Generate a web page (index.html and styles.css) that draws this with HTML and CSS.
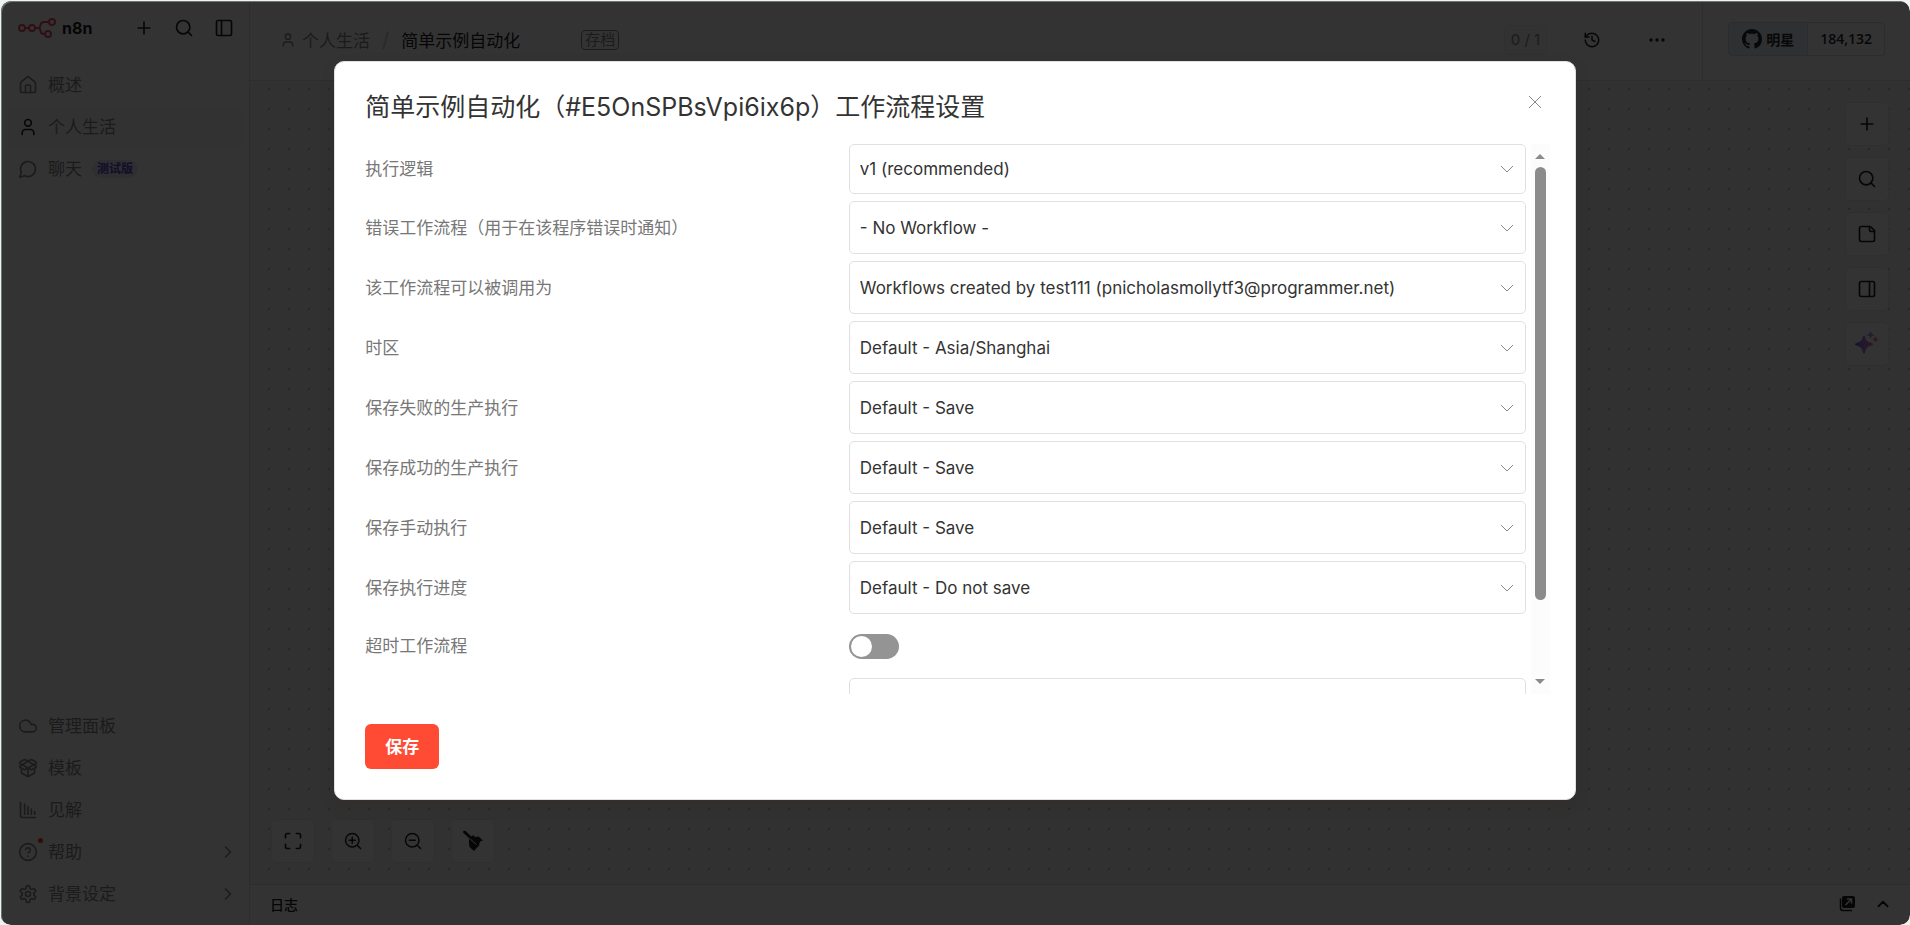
FILE: index.html
```html
<!DOCTYPE html>
<html lang="zh-CN">
<head>
    <meta charset="UTF-8">
    <meta name="viewport" content="width=device-width, initial-scale=1.0">
    <title>简单示例自动化 - n8n</title>
    <link rel="stylesheet" href="styles.css">
</head>
<body>
    <!-- Shared icons -->
    <svg width="0" height="0" class="sprite" aria-hidden="true">
        <symbol id="plus" viewBox="0 0 24 24"><path d="M5 12h14M12 5v14"/></symbol>
        <symbol id="search" viewBox="0 0 24 24"><circle cx="11" cy="11" r="8"/><path d="m21 21-4.3-4.3"/></symbol>
        <symbol id="user" viewBox="0 0 24 24"><circle cx="12" cy="7" r="4"/><path d="M19 21v-2a4 4 0 0 0-4-4H9a4 4 0 0 0-4 4v2"/></symbol>
        <symbol id="chevron-right" viewBox="0 0 24 24"><path d="m9 18 6-6-6-6"/></symbol>
        <symbol id="arrow-down" viewBox="0 0 14 14"><path d="m1 4 6 6 6-6"/></symbol>
    </svg>

    <div class="app">
        <aside class="sidebar">
            <div class="sidebar-header">
                <a href="#" class="logo">
                    <svg class="logo-mark" width="38" height="20" viewBox="0 0 38 20" fill="none" stroke="#ea4b71" stroke-width="2">
                        <circle cx="4" cy="10" r="3"/>
                        <circle cx="14" cy="10" r="3"/>
                        <circle cx="34" cy="4" r="3"/>
                        <circle cx="30" cy="16" r="3"/>
                        <path d="M7 10h4M17 10h4M31 4h-5q-3 0-3.500 3t-2 3q1.500 0 2 3t3.500 3h1"/>
                    </svg>
                    <span>n8n</span>
                </a>
                <button class="icon-btn" aria-label="新建"><svg class="icon"><use href="#plus"/></svg></button>
                <button class="icon-btn" aria-label="搜索"><svg class="icon"><use href="#search"/></svg></button>
                <button class="icon-btn" aria-label="折叠"><svg class="icon" viewBox="0 0 24 24"><rect x="3" y="3" width="18" height="18" rx="2"/><path d="M9 3v18"/></svg></button>
            </div>

            <nav class="menu">
                <a href="#" class="menu-item">
                    <svg class="icon" viewBox="0 0 24 24"><path d="M15 21v-8a1 1 0 0 0-1-1h-4a1 1 0 0 0-1 1v8"/><path d="M3 10a2 2 0 0 1 .7-1.500l7-6a2 2 0 0 1 2.600 0l7 6A2 2 0 0 1 21 10v9a2 2 0 0 1-2 2H5a2 2 0 0 1-2-2z"/></svg>
                    <span class="label">概述</span>
                </a>
                <a href="#" class="menu-item active">
                    <svg class="icon"><use href="#user"/></svg>
                    <span class="label">个人生活</span>
                </a>
                <a href="#" class="menu-item">
                    <svg class="icon" viewBox="0 0 24 24"><path d="M7.900 20A9 9 0 1 0 4 16.100L2 22Z"/></svg>
                    <span class="label">聊天</span>
                    <span class="beta">测试版</span>
                </a>
            </nav>

            <nav class="menu menu-bottom">
                <a href="#" class="menu-item">
                    <svg class="icon" viewBox="0 0 24 24"><path d="M17.500 19H9a7 7 0 1 1 6.700-9h1.800a4.500 4.500 0 1 1 0 9Z"/></svg>
                    <span class="label">管理面板</span>
                </a>
                <a href="#" class="menu-item">
                    <svg class="icon" viewBox="0 0 24 24"><path d="M12 22v-9"/><path d="M15.170 2.210a1.670 1.670 0 0 1 1.630 0L21.500 4.900a.93.93 0 0 1 0 1.600L8.820 13.790a1.650 1.650 0 0 1-1.640 0L2.500 11.100a.93.93 0 0 1 0-1.600z"/><path d="M20 13v3.870a2.060 2.060 0 0 1-1.110 1.830l-6 3.080a1.930 1.930 0 0 1-1.780 0l-6-3.080A2.060 2.060 0 0 1 4 16.870V13"/><path d="M21.500 11.100a.93.93 0 0 0 0-1.600L8.830 2.210a1.640 1.640 0 0 0-1.630 0L2.500 4.900a.93.93 0 0 0 0 1.600l12.680 7.290a1.640 1.640 0 0 0 1.630 0z"/></svg>
                    <span class="label">模板</span>
                </a>
                <a href="#" class="menu-item">
                    <svg class="icon" viewBox="0 0 24 24"><path d="M3 3v16a2 2 0 0 0 2 2h16M8 17V5M12 17V8M16 17v-6M20 17v-3"/></svg>
                    <span class="label">见解</span>
                </a>
                <a href="#" class="menu-item">
                    <svg class="icon" viewBox="0 0 24 24"><circle cx="12" cy="12" r="10"/><path d="M9.100 9a3 3 0 0 1 5.800 1c0 2-3 3-3 3M12 17h.01"/></svg>
                    <span class="label notify">帮助</span>
                    <svg class="icon chevron"><use href="#chevron-right"/></svg>
                </a>
                <a href="#" class="menu-item">
                    <svg class="icon" viewBox="0 0 24 24"><path d="M12.220 2h-.44a2 2 0 0 0-2 2v.18a2 2 0 0 1-1 1.730l-.43.25a2 2 0 0 1-2 0l-.15-.08a2 2 0 0 0-2.730.73l-.22.38a2 2 0 0 0 .73 2.730l.15.1a2 2 0 0 1 1 1.720v.51a2 2 0 0 1-1 1.740l-.15.09a2 2 0 0 0-.73 2.730l.22.38a2 2 0 0 0 2.730.73l.15-.08a2 2 0 0 1 2 0l.43.25a2 2 0 0 1 1 1.730V20a2 2 0 0 0 2 2h.44a2 2 0 0 0 2-2v-.18a2 2 0 0 1 1-1.730l.43-.25a2 2 0 0 1 2 0l.15.08a2 2 0 0 0 2.730-.73l.22-.39a2 2 0 0 0-.73-2.730l-.15-.08a2 2 0 0 1-1-1.740v-.5a2 2 0 0 1 1-1.740l.15-.09a2 2 0 0 0 .73-2.730l-.22-.38a2 2 0 0 0-2.730-.73l-.15.08a2 2 0 0 1-2 0l-.43-.25a2 2 0 0 1-1-1.730V4a2 2 0 0 0-2-2z"/><circle cx="12" cy="12" r="3"/></svg>
                    <span class="label">背景设定</span>
                    <svg class="icon chevron"><use href="#chevron-right"/></svg>
                </a>
            </nav>
        </aside>

        <main class="main">
            <header class="topbar">
                <div class="breadcrumbs">
                    <svg class="icon icon-sm"><use href="#user"/></svg>
                    <a href="#" class="crumb">个人生活</a>
                    <span class="slash">/</span>
                    <span class="workflow-name">简单示例自动化</span>
                    <span class="tag">存档</span>
                </div>
                <div class="actions">
                    <span class="counter">0 / 1</span>
                    <button class="icon-btn" aria-label="历史"><svg class="icon icon-md" viewBox="0 0 24 24"><path d="M3 12a9 9 0 1 0 9-9 9.750 9.750 0 0 0-6.740 2.740L3 8"/><path d="M3 3v5h5M12 7v5l4 2"/></svg></button>
                    <button class="icon-btn" aria-label="更多"><svg class="icon icon-md bold" viewBox="0 0 24 24"><circle cx="12" cy="12" r="1"/><circle cx="20" cy="12" r="1"/><circle cx="4" cy="12" r="1"/></svg></button>
                </div>
                <div class="github">
                    <a href="#" class="gh-btn">
                        <svg width="20" height="20" viewBox="0 0 16 16" fill="currentColor"><path d="M8 0C3.580 0 0 3.580 0 8c0 3.540 2.290 6.530 5.470 7.590.4.070.55-.17.55-.38 0-.19-.01-.82-.01-1.490-2.010.37-2.530-.49-2.690-.94-.09-.23-.48-.94-.82-1.130-.28-.15-.68-.52-.01-.53.63-.01 1.080.58 1.230.82.72 1.210 1.870.87 2.330.66.07-.52.28-.87.51-1.070-1.780-.2-3.640-.89-3.640-3.950 0-.87.31-1.590.82-2.150-.08-.2-.36-1.020.08-2.120 0 0 .67-.21 2.200.82.64-.18 1.320-.27 2-.27s1.360.09 2 .27c1.530-1.040 2.200-.82 2.200-.82.44 1.100.16 1.920.08 2.120.51.56.82 1.270.82 2.150 0 3.070-1.870 3.750-3.650 3.950.29.25.54.73.54 1.480 0 1.070-.01 1.930-.01 2.200 0 .21.15.46.55.38A8.010 8.010 0 0 0 16 8c0-4.420-3.580-8-8-8"/></svg>
                        <span>明星</span>
                    </a>
                    <a href="#" class="gh-count">184,132</a>
                </div>
            </header>

            <section class="canvas">
                <div class="side-tools">
                    <button class="tool" aria-label="添加节点"><svg class="icon"><use href="#plus"/></svg></button>
                    <button class="tool" aria-label="搜索节点"><svg class="icon"><use href="#search"/></svg></button>
                    <button class="tool" aria-label="便签"><svg class="icon" viewBox="0 0 24 24"><path d="M16 3H5a2 2 0 0 0-2 2v14a2 2 0 0 0 2 2h14a2 2 0 0 0 2-2V8Z"/><path d="M15 3v4a2 2 0 0 0 2 2h4"/></svg></button>
                    <button class="tool" aria-label="面板"><svg class="icon" viewBox="0 0 24 24"><rect x="3" y="3" width="18" height="18" rx="2"/><path d="M15 3v18"/></svg></button>
                    <button class="tool" aria-label="AI">
                        <svg width="24" height="24" viewBox="0 0 24 24">
                            <defs><linearGradient id="ai" x1="0" x2="1"><stop offset="0" stop-color="#5b60e8"/><stop offset=".5" stop-color="#aa7bec"/><stop offset="1" stop-color="#ec7b8e"/></linearGradient></defs>
                            <path fill="url(#ai)" d="M8 4.500q1-2 2 0c1 4 2 5 6.500 6.500q3 1 0 2.500c-4 1-5.500 2.500-6.500 7q-1 2.500-2 0c-1-4.500-2.500-6-6.500-7q-3-1.500 0-2.500C6 9.500 7 8.500 8 4.500z"/>
                            <path stroke="#aa7bec" stroke-width="1.500" d="M15.500 0v6M12.500 3h6"/>
                            <path stroke="#ec7b8e" stroke-width="1.500" d="M20.500 5v5M18 7.500h5"/>
                        </svg>
                    </button>
                </div>
                <div class="zoom-tools">
                    <button class="tool" aria-label="适应视图"><svg class="icon" viewBox="0 0 24 24"><path d="M8 3H5a2 2 0 0 0-2 2v3M21 8V5a2 2 0 0 0-2-2h-3M3 16v3a2 2 0 0 0 2 2h3M16 21h3a2 2 0 0 0 2-2v-3"/></svg></button>
                    <button class="tool" aria-label="放大"><svg class="icon icon-md" viewBox="0 0 24 24"><circle cx="11" cy="11" r="9"/><path d="m22 22-4.300-4.300M11 7v8M7 11h8"/></svg></button>
                    <button class="tool" aria-label="缩小"><svg class="icon icon-md" viewBox="0 0 24 24"><circle cx="11" cy="11" r="9"/><path d="m22 22-4.300-4.300M7 11h8"/></svg></button>
                    <button class="tool" aria-label="整理"><svg width="22" height="22" viewBox="0 0 22 22" fill="currentColor"><path d="M2.500 2 9 8" stroke="currentColor" stroke-width="3" stroke-linecap="round"/><path d="m7 9.500 4-4.500 2 2 3.500-.5 4.500 4-3 1-1 4-5 5.500-4.500-4-.5-3z"/><path d="m7.500 8.500 7 6" stroke="#fff"/></svg></button>
                </div>
            </section>

            <footer class="logs">
                <span>日志</span>
                <button class="icon-btn" aria-label="弹出"><svg width="17" height="17" viewBox="0 0 17 17"><rect x="3" y="1" width="13" height="12" rx="2" fill="currentColor"/><path d="M1.500 3.500V13q0 2.500 2.500 2.500h9" fill="none" stroke="currentColor" stroke-width="1.500"/><path d="m6.500 10 6-6M8 4h4.500v4.500" fill="none" stroke="#fff" stroke-width="1.500"/></svg></button>
                <button class="icon-btn" aria-label="展开"><svg class="icon icon-md bold" viewBox="0 0 24 24"><path d="m18 15-6-6-6 6"/></svg></button>
            </footer>
        </main>

        <div class="overlay">
            <div class="modal" role="dialog" aria-modal="true" aria-labelledby="modalTitle">
                <div class="modal-header">
                    <h1 id="modalTitle">简单示例自动化（#E5OnSPBsVpi6ix6p）工作流程设置</h1>
                    <button class="close" aria-label="关闭"><svg width="14" height="14" viewBox="0 0 14 14"><path d="m1 1 12 12M13 1 1 13"/></svg></button>
                </div>

                <div class="modal-body">
                    <form class="settings" id="settings">
                        <div class="row row-first">
                            <label for="order">执行逻辑</label>
                            <div class="select"><select id="order"><option>v1 (recommended)</option></select><svg><use href="#arrow-down"/></svg></div>
                        </div>
                        <div class="row">
                            <label for="errorWorkflow">错误工作流程（用于在该程序错误时通知）</label>
                            <div class="select"><select id="errorWorkflow"><option>- No Workflow -</option></select><svg><use href="#arrow-down"/></svg></div>
                        </div>
                        <div class="row">
                            <label for="caller">该工作流程可以被调用为</label>
                            <div class="select"><select id="caller"><option>Workflows created by test111 (pnicholasmollytf3@programmer.net)</option></select><svg><use href="#arrow-down"/></svg></div>
                        </div>
                        <div class="row">
                            <label for="timezone">时区</label>
                            <div class="select"><select id="timezone"><option>Default - Asia/Shanghai</option></select><svg><use href="#arrow-down"/></svg></div>
                        </div>
                        <div class="row">
                            <label for="saveFailed">保存失败的生产执行</label>
                            <div class="select"><select id="saveFailed"><option>Default - Save</option></select><svg><use href="#arrow-down"/></svg></div>
                        </div>
                        <div class="row">
                            <label for="saveSuccess">保存成功的生产执行</label>
                            <div class="select"><select id="saveSuccess"><option>Default - Save</option></select><svg><use href="#arrow-down"/></svg></div>
                        </div>
                        <div class="row">
                            <label for="saveManual">保存手动执行</label>
                            <div class="select"><select id="saveManual"><option>Default - Save</option></select><svg><use href="#arrow-down"/></svg></div>
                        </div>
                        <div class="row">
                            <label for="saveProgress">保存执行进度</label>
                            <div class="select"><select id="saveProgress"><option>Default - Do not save</option></select><svg><use href="#arrow-down"/></svg></div>
                        </div>
                        <div class="row row-switch">
                            <label for="timeout">超时工作流程</label>
                            <input type="checkbox" role="switch" id="timeout" class="switch">
                        </div>
                        <div class="row">
                            <span></span>
                            <div class="select"><input type="text" aria-label="节省时间"></div>
                        </div>
                    </form>
                    <div class="scrollbar" aria-hidden="true">
                        <span class="arrow up"></span>
                        <span class="track"><span class="thumb"></span></span>
                        <span class="arrow down"></span>
                    </div>
                </div>

                <div class="modal-footer">
                    <button class="save" type="submit" form="settings">保存</button>
                </div>
            </div>
        </div>
    </div>
</body>
</html>
```
FILE: styles.css
```css
* {
    margin: 0;
    padding: 0;
    box-sizing: border-box;
}

body {
    height: 100vh;
    padding: 1px 0 0 1px;
    overflow: hidden;
    background: #eef2f1;
    font-family: Inter, "Noto Sans CJK SC", sans-serif;
    font-size: 17px;
    color: #333;
}

a {
    color: inherit;
    text-decoration: none;
}

button {
    border: none;
    background: none;
    color: inherit;
    font: inherit;
    cursor: pointer;
}

svg {
    display: block;
    flex: none;
}

.sprite {
    position: absolute;
}

.icon {
    width: 20px;
    height: 20px;
    fill: none;
    stroke: currentColor;
    stroke-width: 2;
    stroke-linecap: round;
    stroke-linejoin: round;
}

.icon-sm {
    width: 16px;
    height: 16px;
}

.icon-md {
    width: 18px;
    height: 18px;
}

.bold {
    stroke-width: 2.5;
}

.icon-btn {
    display: flex;
    align-items: center;
    justify-content: center;
    width: 40px;
    height: 40px;
}

.app {
    position: relative;
    display: flex;
    height: 100%;
    border-radius: 10px;
    overflow: hidden;
    background: #fff;
}

/* Sidebar */
.sidebar {
    display: flex;
    flex-direction: column;
    width: 249px;
    flex: none;
    padding: 7px 5px 11px 7px;
    border-right: 1px solid #e0e0e0;
}

.sidebar-header {
    display: flex;
    align-items: center;
    margin-bottom: 17px;
    padding-left: 10px;
    color: #222;
}

.logo {
    display: flex;
    align-items: center;
    gap: 6px;
    margin-right: auto;
    font-size: 16px;
    font-weight: 700;
}

.menu {
    display: flex;
    flex-direction: column;
    gap: 2px;
    color: #888;
}

.menu-bottom {
    margin-top: auto;
}

.menu-item {
    display: flex;
    align-items: center;
    gap: 10px;
    height: 40px;
    padding: 0 6px 0 10px;
    border-radius: 5px;
}

.menu-item.active {
    background: #f8f8f8;
}

.menu-item.active .icon {
    color: #222;
}

.label {
    padding-bottom: 3px;
}

.beta {
    padding: 0 5px;
    border-radius: 9px;
    background: #e8e6f5;
    color: #5b46c8;
    font-size: 12px;
    font-weight: 700;
    line-height: 18px;
}

.chevron {
    margin-left: auto;
}

.notify {
    position: relative;
}

.notify::before {
    content: "";
    position: absolute;
    top: 0;
    left: -10px;
    width: 5px;
    height: 5px;
    border-radius: 50%;
    background: #f33;
}

/* Main */
.main {
    display: flex;
    flex: 1;
    flex-direction: column;
    min-width: 0;
}

.topbar {
    display: flex;
    align-items: stretch;
    height: 80px;
    border-bottom: 1px solid #e0e0e0;
}

.breadcrumbs {
    display: flex;
    flex: 1;
    align-items: center;
    padding: 0 0 2px 30px;
    color: #888;
}

.crumb {
    margin-left: 6px;
}

.slash {
    margin: 0 12px;
    color: #ccc;
    font-size: 20px;
}

.workflow-name {
    color: #222;
}

.tag {
    margin-left: 61px;
    padding: 0 3px;
    border: 1px solid #888;
    border-radius: 4px;
    font-size: 15px;
    line-height: 18px;
}

.actions {
    display: flex;
    align-items: center;
    gap: 25px;
    padding: 0 25px 2px 0;
    color: #222;
}

.counter {
    padding: 0 6px;
    border: 1px solid #f0f0f0;
    border-radius: 4px;
    background: #f8f8f8;
    color: #888;
    font-size: 15px;
    line-height: 28px;
}

.github {
    display: flex;
    align-items: center;
    padding: 0 25px;
    border-left: 1px solid #e0e0e0;
    color: #25292e;
    font-size: 14px;
    font-weight: 600;
}

.gh-btn,
.gh-count {
    display: flex;
    align-items: center;
    height: 34px;
    margin-bottom: 4px;
    border: 1px solid #d5dadf;
}

.gh-btn {
    gap: 4px;
    padding: 0 13px;
    border-radius: 4px 0 0 4px;
    background: #ebf0f4;
}

.gh-count {
    padding: 0 12px;
    border-left: none;
    border-radius: 0 4px 4px 0;
    font-family: "Open Sans", sans-serif;
}

.canvas {
    display: flex;
    flex: 1;
    flex-direction: column;
    justify-content: space-between;
    padding: 21px;
    background: #f5f5f5 radial-gradient(circle at 19px 8px, #c4c4c4 1px, transparent 1px) 0 0 / 20px 20px;
}

.side-tools {
    display: flex;
    flex-direction: column;
    align-self: flex-end;
    gap: 11px;
}

.zoom-tools {
    display: flex;
    gap: 16px;
}

.tool {
    display: flex;
    align-items: center;
    justify-content: center;
    width: 44px;
    height: 44px;
    border: 1px solid #e8e8e8;
    border-radius: 5px;
    background: #fff;
    color: #222;
}

.logs {
    display: flex;
    align-items: center;
    height: 41px;
    padding: 0 10px 3px 20px;
    border-top: 1px solid #e0e0e0;
    color: #222;
    font-size: 14px;
    font-weight: 500;
}

.logs span {
    flex: 1;
}

.logs .icon-btn {
    width: 35px;
}

/* Modal */
.overlay {
    position: absolute;
    inset: 0 0 0 -1px;
    display: flex;
    align-items: flex-start;
    justify-content: center;
    padding-top: 60px;
    border-radius: 10px;
    background: rgba(0, 0, 0, 0.8);
    box-shadow: inset 2px 1px 0 #6f7573;
}

.modal {
    width: 65%;
    padding: 0 25px 30px 30px;
    border: 1px solid #e0e0e0;
    border-radius: 10px;
    background: #fff;
    box-shadow: 0 6px 16px rgba(68, 28, 23, 0.1);
}

.modal-header {
    display: flex;
    align-items: flex-start;
    justify-content: space-between;
    padding: 30px 8px 22px 0;
}

.modal-header h1 {
    font-size: 25px;
    font-weight: 400;
    line-height: 30px;
}

.close {
    margin-top: 3px;
}

.close svg {
    fill: none;
    stroke: #888;
}

.modal-body {
    display: flex;
    gap: 5px;
    height: calc(100vh - 375px);
}

.settings {
    flex: 1;
    overflow: hidden;
}

.row {
    display: grid;
    grid-template-columns: 10fr 14fr;
    align-items: center;
    height: 53px;
    margin-bottom: 7px;
}

.row-first {
    height: 50px;
}

.row-switch {
    height: 50px;
}

.row label {
    padding-bottom: 3px;
    color: #777;
}

.select {
    display: grid;
    align-items: center;
    height: 100%;
    border: 1px solid #e0e0e0;
    border-radius: 5px;
}

.select select,
.select input {
    grid-area: 1 / 1;
    width: 100%;
    height: 100%;
    padding: 0 40px 0 10px;
    border: none;
    outline: none;
    background: none;
    appearance: none;
    color: #333;
    font: inherit;
}

.select svg {
    grid-area: 1 / 1;
    justify-self: end;
    width: 14px;
    height: 14px;
    margin-right: 11px;
    fill: none;
    stroke: #888;
    pointer-events: none;
}

.switch {
    width: 50px;
    height: 25px;
    padding: 2px;
    border-radius: 13px;
    background: #949494;
    appearance: none;
}

.switch::before {
    content: "";
    display: block;
    width: 21px;
    height: 21px;
    border-radius: 50%;
    background: #fff;
}

.scrollbar {
    display: flex;
    flex-direction: column;
    align-items: center;
    width: 19px;
    padding: 10px 0;
    background: #fcfcfc;
}

.arrow {
    border: 5px solid transparent;
}

.arrow.up {
    border-top: none;
    border-bottom-color: #8b8b8b;
}

.arrow.down {
    border-bottom: none;
    border-top-color: #8b8b8b;
}

.track {
    flex: 1;
    padding: 8px 0;
}

.thumb {
    display: block;
    width: 11px;
    height: 86%;
    border-radius: 6px;
    background: #8b8b8b;
}

.modal-footer {
    padding-top: 30px;
}

.save {
    height: 45px;
    padding: 0 20px 2px;
    border-radius: 6px;
    background: #ff4b33;
    color: #fff;
    font-weight: 700;
}
```
